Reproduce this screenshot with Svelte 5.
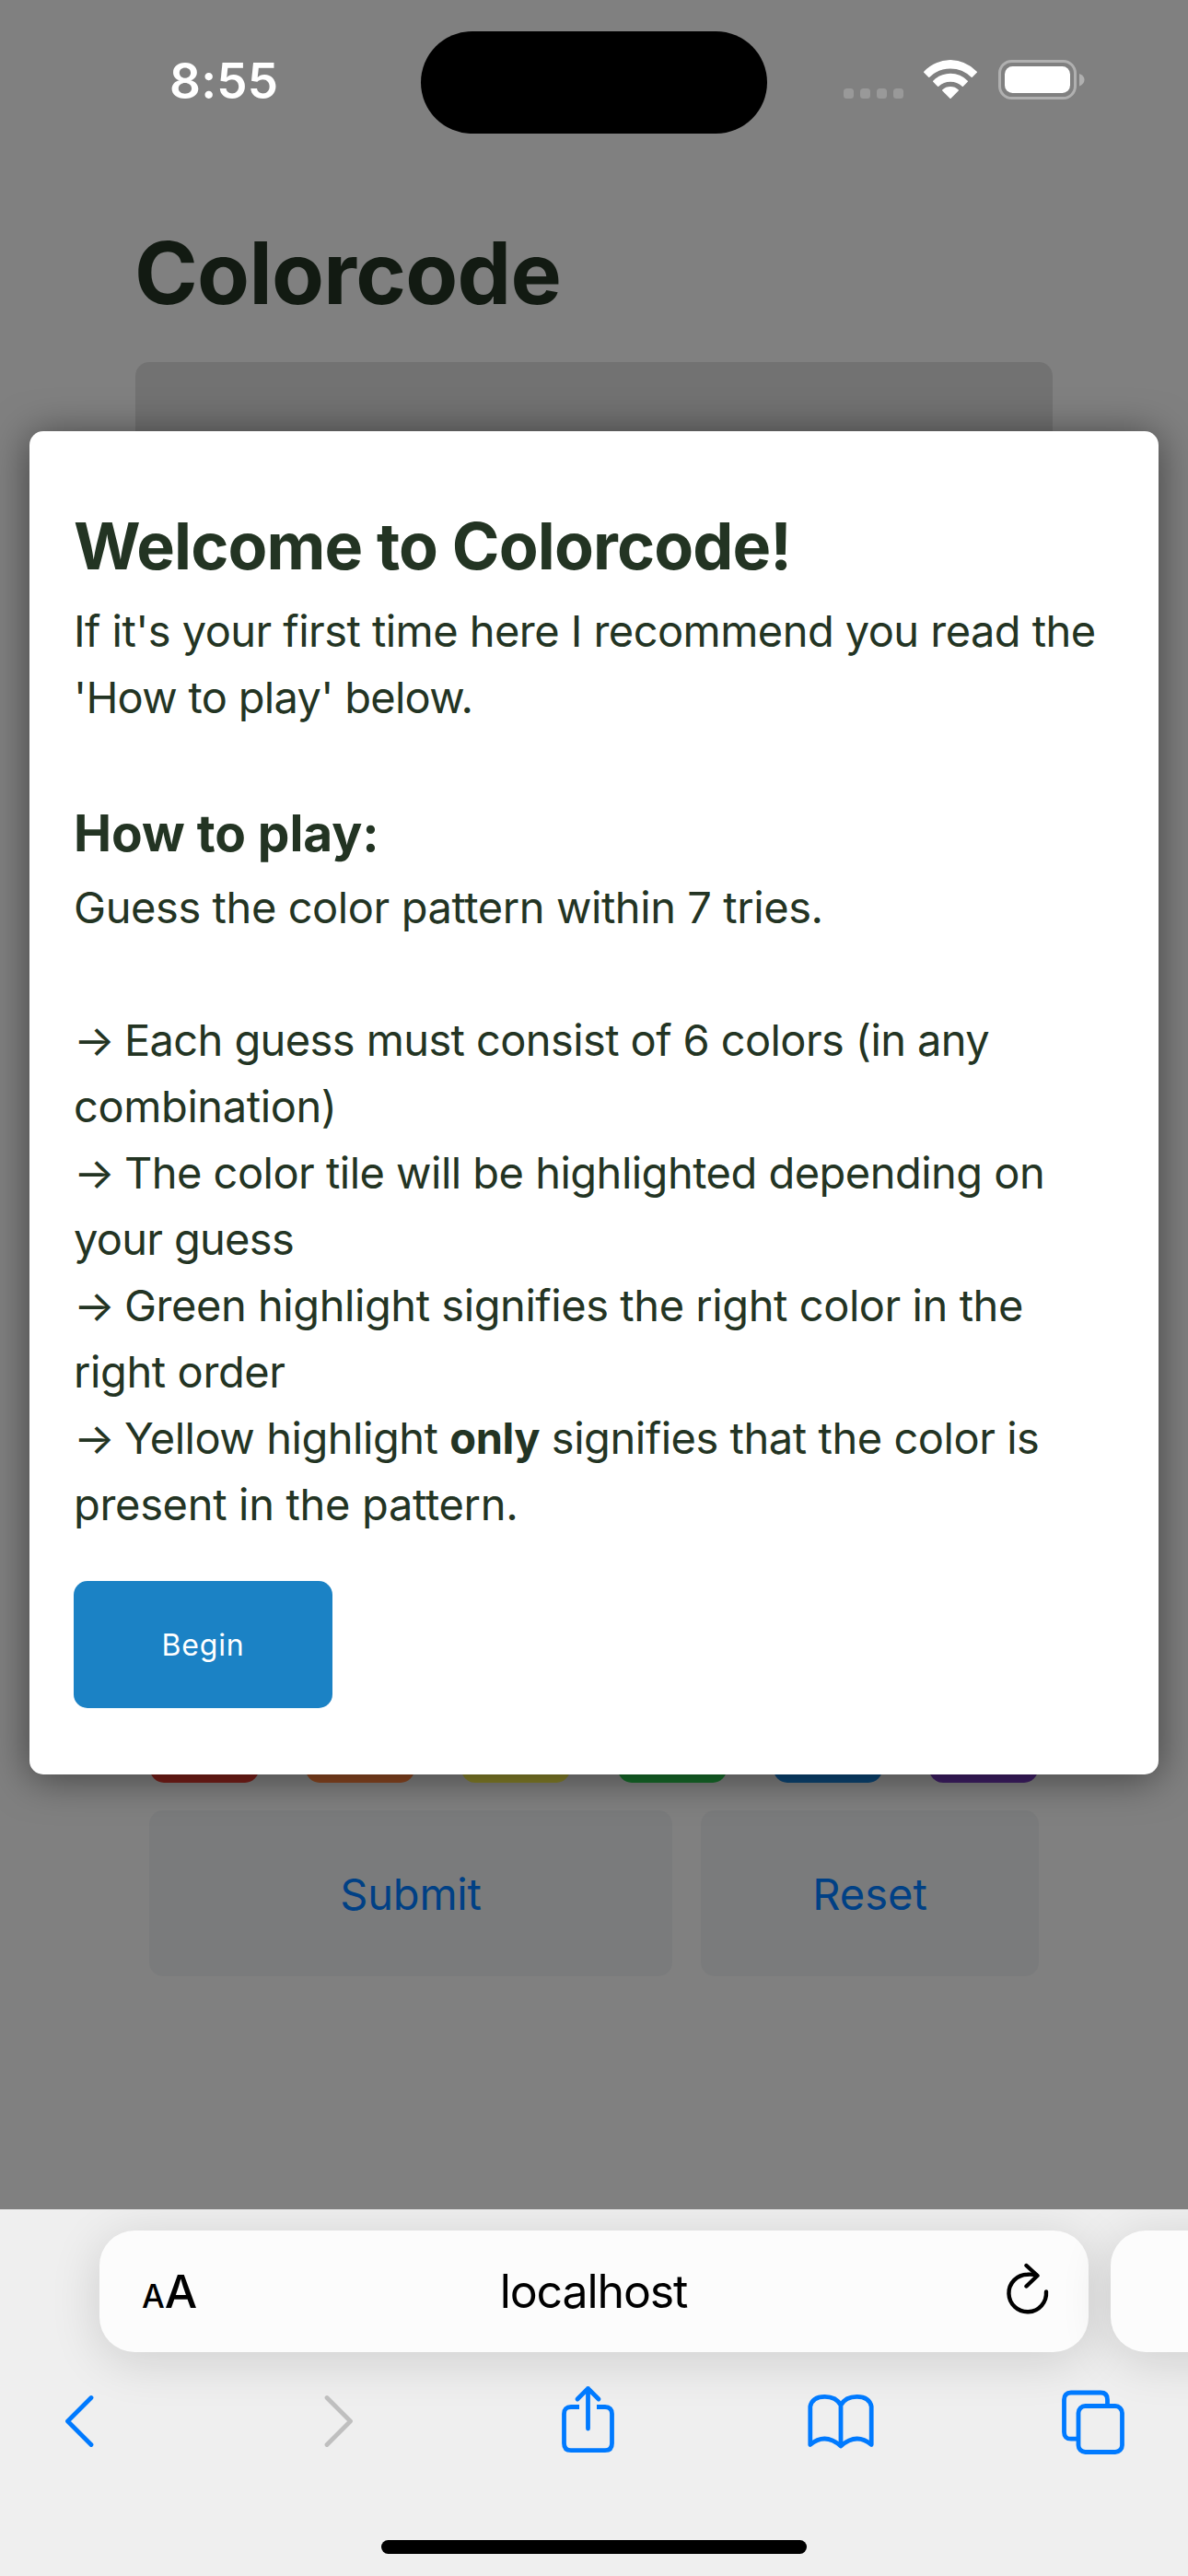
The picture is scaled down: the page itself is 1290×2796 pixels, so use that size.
<script>
  const tiles = ['red', 'orange', 'yellow', 'green', 'blue', 'purple'];

  // Each rule is broken by hand; track is the letter spacing of the line.
  const rules = [
    { arrow: true, text: 'Each guess must consist of 6 colors (in any', track: -0.6 },
    { text: 'combination)', track: -0.4 },
    { arrow: true, text: 'The color tile will be highlighted depending on', track: -0.52 },
    { text: 'your guess', track: -0.7 },
    { arrow: true, text: 'Green highlight signifies the right color in the', track: -0.44 },
    { text: 'right order', track: -0.4 },
    { arrow: true, text: 'Yellow highlight ', strong: 'only', rest: ' signifies that the color is', track: -0.46 },
    { text: 'present in the pattern.', track: -0.32 }
  ];
</script>

<div class="phone">
  <main class="page">
    <header class="status">
      <time>8:55</time>
      <div class="island"></div>
      <div class="indicators">
        <div class="dots"><i></i><i></i><i></i><i></i></div>
        <svg class="wifi" viewBox="0 0 58 43" width="58" height="43">
          <g fill="#fff" stroke="#fff" stroke-width="1.6" stroke-linejoin="round">
            <path d="M29 .8A41.2 41.2 0 0 1 57.2 13.2L52.2 18.2A33 33 0 0 0 5.8 18.2L.8 13.2A41.2 41.2 0 0 1 29 .8Z" />
            <path d="M29 15.6A26.4 26.4 0 0 1 47.2 23.2L42.3 28.2A19.6 19.6 0 0 0 15.7 28.2L10.8 23.2A26.4 26.4 0 0 1 29 15.6Z" />
            <path d="M29 29.8A12 12 0 0 1 37.2 33L29 41.2L20.8 33A12 12 0 0 1 29 29.8Z" />
          </g>
        </svg>
        <svg class="battery" viewBox="0 0 95 43" width="95" height="43">
          <rect x="1.5" y="1.5" width="82" height="40" rx="13" fill="none" stroke="#b0b0b0" stroke-width="3" />
          <rect x="7" y="7" width="71" height="29" rx="8.5" fill="#fff" />
          <path d="M88 15Q93.5 17 93.5 21.500T88 28.500Z" fill="#b0b0b0" />
        </svg>
      </div>
    </header>

    <h1>Colorcode</h1>
    <div class="board"></div>
    <div class="tiles">
      {#each tiles as tile}<div class="tile {tile}"></div>{/each}
    </div>
    <div class="actions">
      <div class="action submit">Submit</div>
      <div class="action">Reset</div>
    </div>
  </main>

  <section class="modal">
    <h2>Welcome to Colorcode!</h2>
    <p><span class="line intro-a">If it's your first time here I recommend you read the</span><span class="line intro-b">'How to play' below.</span></p>
    <h3>How to play:</h3>
    <p class="goal"><span class="line">Guess the color pattern within 7 tries.</span></p>
    <p>
      {#each rules as rule}
        <span class="line" style:letter-spacing="{rule.track}px">{#if rule.arrow}<i class="arrow">{'→ '}</i>{/if}{rule.text}{#if rule.strong}<b>{rule.strong}</b>{rule.rest}{/if}</span>
      {/each}
    </p>
    <button>Begin</button>
  </section>

  <footer class="safari">
    <div class="tabs">
      <div class="address">
        <div class="aa"><small>A</small><span>A</span></div>
        <div class="host">localhost</div>
        <svg class="reload" viewBox="0 0 46 56" width="46" height="56">
          <g fill="none" stroke="#000" stroke-width="4.4" stroke-linecap="round" stroke-linejoin="round">
            <path d="M43 31.500A20.300 20.300 0 1 1 22.700 12.700Q28 12.300 32.500 13.500" />
            <path d="M21.500 3L33.500 14L21.500 25.500" />
          </g>
        </svg>
      </div>
      <div class="address next"></div>
    </div>

    <nav>
      <svg class="back" viewBox="0 0 32 76" width="32" height="76">
        <path d="M29 13.500L3.500 39L29 64.500" />
      </svg>
      <svg class="forward" viewBox="0 0 32 76" width="32" height="76">
        <path d="M3 13.500L28.500 39L3 64.500" />
      </svg>
      <svg class="share" viewBox="0 0 57 76" width="57" height="76">
        <path class="butt" d="M19 23.500H10Q2.500 23.500 2.500 31V63Q2.500 70.700 10 70.700H47Q54.500 70.700 54.500 63V31Q54.500 23.500 47 23.500H38" />
        <path d="M28.500 47V3.500M17 15L28.500 3.500L40 15" />
      </svg>
      <svg class="book" viewBox="0 0 72 76" width="72" height="76">
        <path d="M36 66Q19 51 2.800 64.500V23Q5 12.300 18.500 12.300Q31 12.300 36 21.500Q41 12.300 53.500 12.300Q67 12.300 69.200 23V64.500Q53 51 36 66V21.500" />
      </svg>
      <svg class="pages" viewBox="0 0 68 76" width="68" height="76">
        <rect x="18" y="22.500" width="47.500" height="50" rx="7.500" />
        <path class="butt" d="M18 58.200H10Q2.500 58.200 2.500 50.700V15.500Q2.500 8 10 8H42Q49.500 8 49.500 15.500V22.500" />
      </svg>
    </nav>
    <div class="home"></div>
  </footer>
</div>

<style>
  :global(body) { margin: 0; }
  .phone {
    position: relative;
    width: 1290px;
    height: 2796px;
    display: flex;
    flex-direction: column;
    overflow: hidden;
    font-family: Inter, "Liberation Sans", sans-serif;
    color: #233423;
  }
  h1, h2, h3, p { margin: 0; }

  .page {
    display: flex;
    flex-direction: column;
    height: 2398px;
    box-sizing: border-box;
    padding: 33px 147px 0;
    background: #808080;
  }
  .status {
    display: grid;
    grid-template-columns: 309px 377px 1fr;
    height: 112px;
    margin-right: -147px;
    color: #fff;
  }
  time {
    padding-left: 37px;
    font-size: 53px;
    font-weight: 600;
    line-height: 63px;
    letter-spacing: 0.2px;
    margin-top: 24px;
  }
  .island { margin: 0.5px; border-radius: 56px; background: #000; }
  .indicators { display: flex; align-items: flex-start; padding: 32px 0 0 83px; }
  .dots { display: flex; gap: 7px; margin-top: 31px; width: 87px; }
  .dots i { width: 11px; height: 11px; border-radius: 3.5px; background: #999; }
  .battery { margin-left: 23px; }

  h1 {
    margin-top: 89px;
    height: 159px;
    font-size: 93px;
    line-height: 124px;
    letter-spacing: -0.7px;
    color: #121a12;
    margin-left: -1px;
  }
  .board { flex: none; height: 1392px; border-radius: 15px; background: #727272; }
  .tiles { display: flex; justify-content: space-between; padding: 32px 16px 30px; }
  .tile { width: 118px; height: 118px; border-radius: 15px; }
  .red { background: #7b1f19; }
  .orange { background: #8e4822; }
  .yellow { background: #88832a; }
  .green { background: #176f2b; }
  .blue { background: #0c4777; }
  .purple { background: #401f68; }
  .actions { display: flex; gap: 31px; padding: 0 15px; }
  .action {
    flex: 1;
    height: 180px;
    border-radius: 15px;
    background: #7a7b7c;
    color: #004085;
    font-size: 47px;
    line-height: 181px;
    text-align: center;
  }
  .submit { flex: none; width: 568px; letter-spacing: -0.2px; }

  .modal {
    position: absolute;
    left: 32px;
    top: 468px;
    width: 1226px;
    height: 1458px;
    box-sizing: border-box;
    padding: 68px 48px 0;
    border-radius: 15px;
    background: #fff;
    box-shadow: 0 4px 44px rgba(0, 0, 0, 0.5);
  }
  h2 { font-size: 70px; line-height: 113px; letter-spacing: -0.88px; }
  h3 { margin-top: 66px; font-size: 55px; line-height: 90px; letter-spacing: -0.05px; }
  .modal p { font-size: 47px; line-height: 72px; }
  .line { display: block; white-space: pre; }
  .arrow { font-style: normal; letter-spacing: -1.6px; }
  .intro-a { letter-spacing: -0.55px; }
  .intro-b { letter-spacing: -0.7px; }
  .goal { margin-bottom: 72px; letter-spacing: -0.42px; }
  button {
    display: block;
    width: 281px;
    height: 138px;
    margin-top: 47px;
    padding: 0;
    border: 0;
    border-radius: 15px;
    background: #1b82c5;
    color: #fff;
    font-family: inherit;
    font-size: 32px;
    letter-spacing: 0.8px;
  }

  .safari {
    height: 398px;
    background: #efefef;
    color: #000;
    display: flex;
    flex-direction: column;
    overflow: hidden;
  }
  .tabs { display: flex; gap: 24px; padding: 23px 0 0 108px; }
  .address {
    flex: none;
    display: grid;
    grid-template-columns: 1fr auto 1fr;
    align-items: center;
    width: 1074px;
    height: 132px;
    box-sizing: border-box;
    padding: 0 43px 0 46px;
    border-radius: 38px;
    background: #fcfcfc;
    box-shadow: 0 9px 54px rgba(0, 0, 0, 0.14);
  }
  .aa { display: flex; align-items: baseline; gap: 1px; font-size: 50px; font-weight: 500; letter-spacing: -1px; }
  .aa small { font-size: 35px; }
  .host { margin-left: -4px; font-size: 50px; letter-spacing: -1.1px; }
  .reload { justify-self: end; margin-top: -6px; }

  nav { display: flex; padding: 36px 0 0 70px; }
  nav svg { flex: none; fill: none; stroke: #007aff; stroke-width: 4.8; stroke-linecap: round; stroke-linejoin: round; }
  nav .forward { margin-left: 250px; stroke: #bfbfbf; }
  nav .share { margin-left: 226px; }
  nav .book { margin-left: 210px; }
  nav .pages { margin-left: 204px; }
  nav .butt { stroke-linecap: butt; }
  .home { width: 462px; height: 15px; margin: 92px auto 0; border-radius: 8px; background: #000; }
</style>
